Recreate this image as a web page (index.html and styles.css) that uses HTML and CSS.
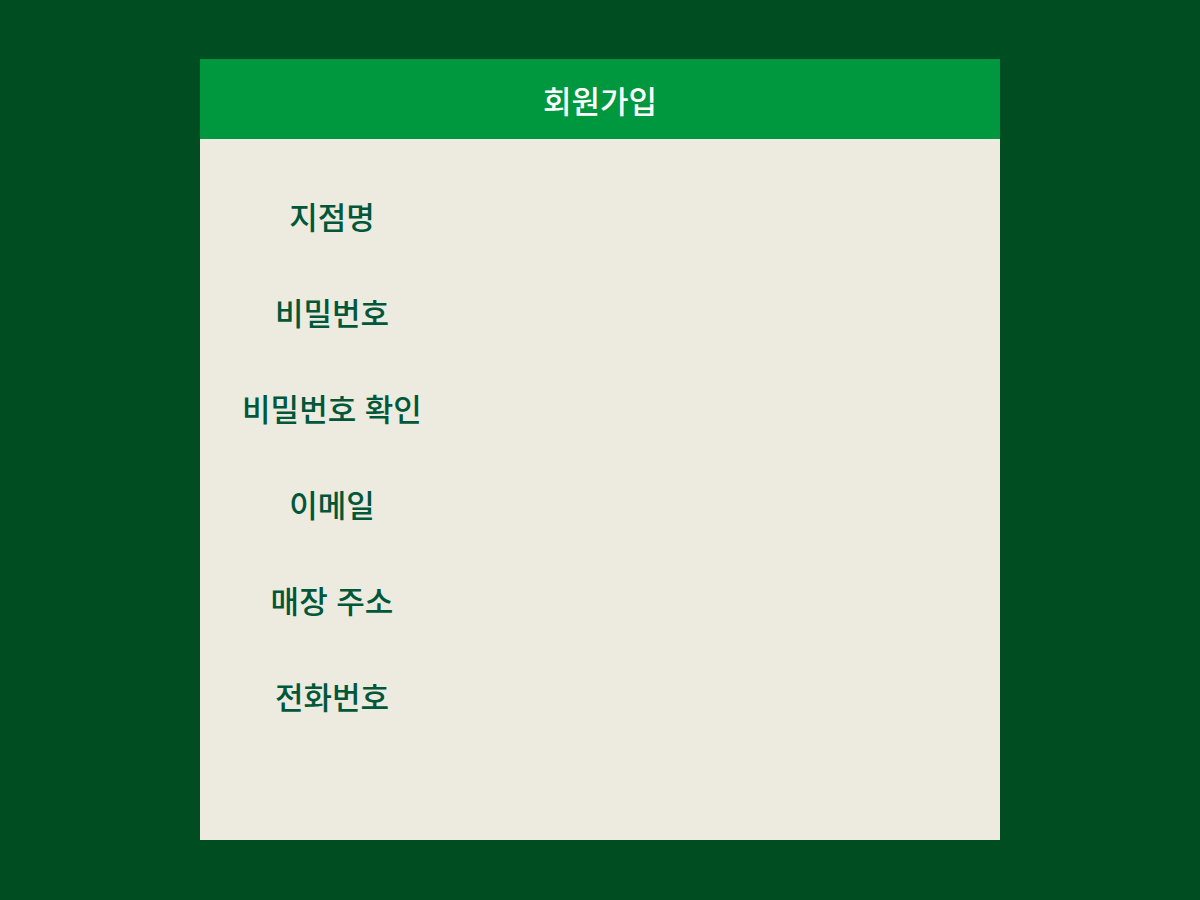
FILE: index.html
```html
<!DOCTYPE html>
<html lang="ko">
<head>
<meta charset="utf-8">
<title>회원가입</title>
<link rel="stylesheet" href="styles.css">
</head>
<body>
<div class="card">
  <div class="header">회원가입</div>
  <form class="form">
    <div class="row"><label class="label">지점명</label></div>
    <div class="row"><label class="label">비밀번호</label></div>
    <div class="row"><label class="label">비밀번호 확인</label></div>
    <div class="row"><label class="label">이메일</label></div>
    <div class="row"><label class="label">매장 주소</label></div>
    <div class="row"><label class="label">전화번호</label></div>
  </form>
</div>
</body>
</html>
```
FILE: styles.css
```css
html, body {
  margin: 0;
  padding: 0;
}
body {
  background: #004d22;
  font-family: "Noto Sans CJK KR", "Noto Sans", sans-serif;
  padding-top: 59px;
  height: 900px;
  box-sizing: border-box;
}
.card {
  width: 800px;
  height: 781px;
  margin: 0 auto;
  background: #edebdf;
}
.header {
  height: 80px;
  background: #00983f;
  color: #ffffff;
  font-size: 31px;
  font-weight: 500;
  display: flex;
  align-items: center;
  justify-content: center;
}
.form {
  padding: 29px 0 0 32px;
  display: flex;
  flex-direction: column;
}
.row {
  height: 96px;
  display: flex;
  align-items: center;
}
.label {
  width: 200px;
  text-align: center;
  font-size: 31px;
  font-weight: 500;
  line-height: 1.2;
  color: #00573a;
}
```
